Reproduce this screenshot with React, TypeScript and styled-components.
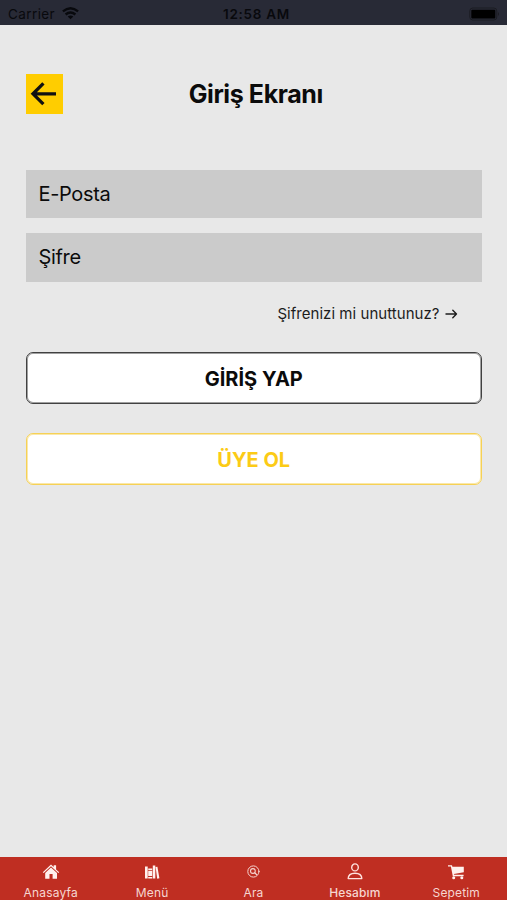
import React from "react";
import styled, { createGlobalStyle } from "styled-components";

const GlobalStyle = createGlobalStyle`
  * { box-sizing: border-box; }
  body { margin: 0; background: #e8e8e8; }
  button, input { font: inherit; }
`;

const Screen = styled.div`
  width: 507px;
  height: 900px;
  display: flex;
  flex-direction: column;
  background: #e8e8e8;
  color: #0b0b0b;
  font-family: Inter, "Liberation Sans", sans-serif;
  overflow: hidden;
`;

const StatusBar = styled.header`
  height: 25px;
  flex: none;
  display: grid;
  grid-template-columns: 1fr auto 1fr;
  align-items: center;
  padding: 3px 7px 0 8px;
  background: #282a36;
  color: #08090d;
  font-size: 13.5px;
  line-height: 20px;
`;

const Carrier = styled.div`
  display: flex;
  align-items: center;
  gap: 7px;
  letter-spacing: 0.4px;
  svg { display: block; margin-top: -2px; }
`;

const Clock = styled.div`
  font-weight: 600;
  letter-spacing: 0.72px;
  padding-left: 5px;
`;

const BatterySlot = styled.div`
  display: flex;
  justify-content: flex-end;
  svg { display: block; margin-top: -1px; }
`;

const Content = styled.main`
  flex: 1;
  display: flex;
  flex-direction: column;
  padding: 49px 25.5px 0 26px;
`;

const TitleRow = styled.div`
  display: grid;
  grid-template-columns: 37px 1fr 37px;
  align-items: center;
  height: 40px;
`;

const BackButton = styled.button`
  width: 37px;
  height: 40px;
  padding: 0;
  border: 0;
  background: #ffcd00;
  svg { display: block; }
`;

const Title = styled.h1`
  margin: 0;
  padding-left: 4px;
  text-align: center;
  font-size: 25px;
  line-height: 40px;
  font-weight: 700;
  letter-spacing: -0.4px;
`;

const Fields = styled.div`
  display: flex;
  flex-direction: column;
  gap: 15px;
  margin-top: 55.5px;
`;

const Field = styled.div`
  height: 48.6px;
  padding-left: 12.5px;
  background: #cbcbcb;
  font-size: 20px;
  line-height: 49px;
  letter-spacing: -0.35px;
`;

const ForgotLink = styled.div`
  display: flex;
  align-self: flex-end;
  align-items: center;
  gap: 5px;
  height: 24px;
  margin: 20px 24px 0 0;
  font-size: 15px;
  letter-spacing: 0.04px;
  color: #1c1c1c;
`;

const Actions = styled.div`
  display: flex;
  flex-direction: column;
  gap: 29px;
  margin-top: 26px;
`;

const ActionButton = styled.button<{ $tone: string; $line: string }>`
  height: 52px;
  padding: 2px 0 0;
  border: 1px solid ${(p) => p.$line};
  border-radius: 7px;
  background: #fff;
  box-shadow: inset 0 0 0 1px ${(p) => p.$line}80;
  color: ${(p) => p.$tone};
  font-size: 20px;
  font-weight: 700;
  letter-spacing: 0;
`;

const TabBar = styled.nav`
  flex: none;
  height: 43px;
  display: grid;
  grid-template-columns: repeat(5, 1fr);
  background: #bf2e22;
`;

const Tab = styled.div<{ $active?: boolean }>`
  display: flex;
  flex-direction: column;
  align-items: center;
  padding-top: 5px;
  color: #f6d6d1;
  font-size: 12px;
  line-height: 16px;
  font-weight: ${(p) => (p.$active ? 500 : 400)};
  letter-spacing: 0.16px;
  svg { display: block; margin-bottom: 3px; }
`;

const WifiIcon = () => (
  <svg width="17" height="13" viewBox="0 0 17 13" fill="none" stroke="currentColor" strokeWidth="2.3">
    <path d="M.9 4.4Q8.5-2 16.1 4.4M3.6 7.5q4.9-4 9.8 0" />
    <path d="M8.5 12.2 5.7 9.5q2.8-2 5.6 0Z" fill="currentColor" stroke="none" />
  </svg>
);

const BatteryIcon = () => (
  <svg width="31" height="14" viewBox="0 0 31 14">
    <rect x=".8" y="1" width="27" height="12" rx="3" fill="none" stroke="#1b1c22" />
    <rect x="2.3" y="2.7" width="24" height="8.8" rx="1" fill="#000" />
    <path d="M29 5q2 2 0 4Z" fill="#1b1c22" />
  </svg>
);

const BackIcon = () => (
  <svg width="37" height="40" viewBox="0 0 37 40" fill="none" stroke="#111" strokeWidth="3.3">
    <path d="M30 19.8H7.5M17.4 9.4 7 19.8 17.4 30.2" />
  </svg>
);

const ForwardIcon = () => (
  <svg width="13" height="12" viewBox="0 0 13 12" fill="none" stroke="currentColor" strokeWidth="1.4" strokeLinecap="round" strokeLinejoin="round">
    <path d="M1 6h10.5M7.8 2.3 11.5 6 7.8 9.7" />
  </svg>
);

const HomeIcon = () => (
  <svg width="20" height="20" viewBox="0 0 20 20" fill="#fff1ee">
    <path d="m1.8 10.2 8.2-7.8 2.7 2.5V3.2h2.4v4.2l3.1 2.8-.9.9L10 4.3 2.7 11.1Z" />
    <path d="m10 5.4 6 5.5v5.8h-4.4v-4.8H8.5v4.8H4.2v-5.8Z" />
  </svg>
);

const BooksIcon = () => (
  <svg width="20" height="20" viewBox="0 0 20 20" fill="#fff1ee">
    <path d="M3 4.6h2.7v12H3zM6.2 6.5h4v1.4h-4zM6.2 8.8h4v5.3h-4zM6.2 15h4v1.6h-4zM10.8 3.4h2.5v13.2h-2.5zM13.6 5.1l1.8-.3 2 11.5-2.2.4Z" />
  </svg>
);

const SearchIcon = () => (
  <svg width="20" height="20" viewBox="0 0 20 20" fill="none" stroke="currentColor" strokeLinecap="round">
    <circle cx="10.4" cy="9.5" r="5.6" strokeWidth="1" />
    <circle cx="9.9" cy="9" r="2.4" strokeWidth="1.1" />
    <path d="m11.7 10.8 1.8 1.7" strokeWidth="1.2" />
  </svg>
);

const PersonIcon = () => (
  <svg width="20" height="20" viewBox="0 0 20 20" fill="none" stroke="#ffe2de" strokeWidth="1.4" strokeLinejoin="round">
    <ellipse cx="10" cy="5.4" rx="3.3" ry="3.5" />
    <path d="M3.2 16.6c0-3.8 2.8-5.4 6.8-5.4s6.8 1.6 6.8 5.4Z" />
  </svg>
);

const CartIcon = () => (
  <svg width="20" height="20" viewBox="0 0 20 20" fill="#fff1ee">
    <path d="M2 3.2h4l.4 1.6h11.4v5.4l-9.9 1.8.3.8h9.4v1.4H6.8L4.9 4.6H2Z" />
    <circle cx="7.7" cy="15.8" r="1.5" />
    <circle cx="15.8" cy="15.8" r="1.5" />
  </svg>
);

const tabs = [
  { label: "Anasayfa", Icon: HomeIcon },
  { label: "Menü", Icon: BooksIcon },
  { label: "Ara", Icon: SearchIcon },
  { label: "Hesabım", Icon: PersonIcon, active: true },
  { label: "Sepetim", Icon: CartIcon },
];

export default function App() {
  return (
    <Screen lang="tr">
      <GlobalStyle />
      <StatusBar>
        <Carrier>Carrier<WifiIcon /></Carrier>
        <Clock>12:58 AM</Clock>
        <BatterySlot><BatteryIcon /></BatterySlot>
      </StatusBar>
      <Content>
        <TitleRow>
          <BackButton aria-label="Geri"><BackIcon /></BackButton>
          <Title>Giriş Ekranı</Title>
        </TitleRow>
        <Fields>
          <Field>E-Posta</Field>
          <Field>Şifre</Field>
        </Fields>
        <ForgotLink>Şifrenizi mi unuttunuz?<ForwardIcon /></ForgotLink>
        <Actions>
          <ActionButton $tone="#0b0b0b" $line="#414141">GİRİŞ YAP</ActionButton>
          <ActionButton $tone="#fccb16" $line="#f6d155">ÜYE OL</ActionButton>
        </Actions>
      </Content>
      <TabBar>
        {tabs.map(({ label, Icon, active }) => (
          <Tab key={label} $active={active}><Icon />{label}</Tab>
        ))}
      </TabBar>
    </Screen>
  );
}
